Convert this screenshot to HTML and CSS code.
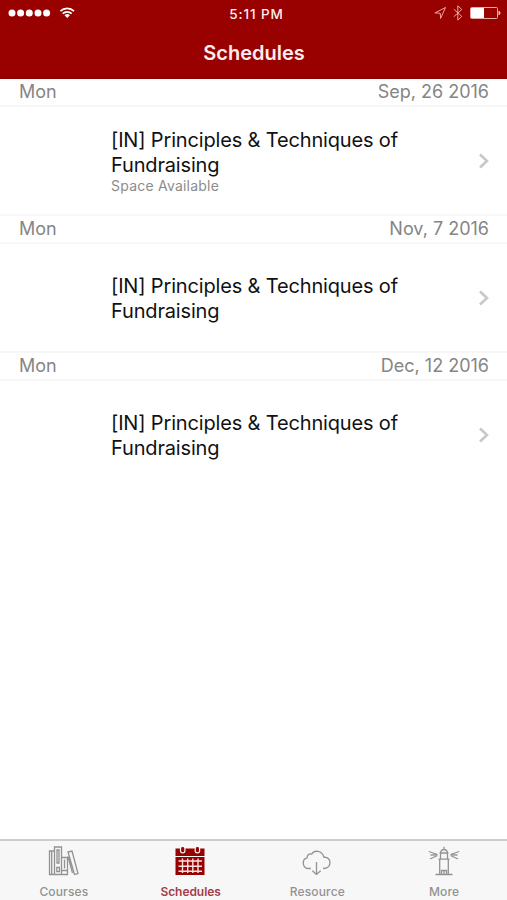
FILE: index.html
```html
<!DOCTYPE html>
<html lang="en">
<head>
<meta charset="utf-8">
<title>Schedules</title>
<link rel="stylesheet" href="styles.css">
</head>
<body>
<div class="app">
  <header class="top">
    <div class="status">
      <svg class="signal" width="80" height="26" viewBox="0 0 80 26">
        <g fill="#fff"><circle cx="12" cy="13" r="3.5"/><circle cx="20.6" cy="13" r="3.5"/><circle cx="29.3" cy="13" r="3.5"/><circle cx="38" cy="13" r="3.5"/><circle cx="46.6" cy="13" r="3.5"/><path d="M67.2 18l-2.7-2.8a3.9 3.9 0 0 1 5.4 0z"/></g>
        <g fill="none" stroke="#fff" stroke-width="1.7"><path d="M60.4 11.2a9.8 9.8 0 0 1 13.6 0M62.7 13.6a6.5 6.5 0 0 1 9 0"/></g>
      </svg>
      <span class="clock">5:11 PM</span>
      <svg class="indicators" width="80" height="26" viewBox="427 0 80 26">
        <g fill="none" stroke="#e9a9a5" stroke-width="1"><path d="M445.5 7.5l-10.6 5.4 5.3.3.4 5.2z"/><path d="M453.8 9.2l8 7.2-4 3.7V5.8l4 3.7-8 7.2"/><rect x="470.5" y="7.5" width="27" height="11" rx="1"/></g>
        <path d="M471 8h13v10h-13z" fill="#fff"/><path d="M498.5 10.8q2 .4 2 2.2t-2 2.2z" fill="#f1c4bf"/>
      </svg>
    </div>
    <h1 class="title">Schedules</h1>
  </header>
  <main class="list">
    <section class="group">
      <div class="day"><span>Mon</span><span>Sep, 26 2016</span></div>
      <div class="course">
        <div class="info"><div class="name">[IN] Principles &amp; Techniques of Fundraising</div><div class="note">Space Available</div></div>
        <svg class="chevron" width="12" height="18" viewBox="0 0 12 18"><path d="M2 2.5l7 6.5-7 6.5"/></svg>
      </div>
    </section>
    <section class="group">
      <div class="day"><span>Mon</span><span>Nov, 7 2016</span></div>
      <div class="course">
        <div class="info"><div class="name">[IN] Principles &amp; Techniques of Fundraising</div></div>
        <svg class="chevron" width="12" height="18" viewBox="0 0 12 18"><path d="M2 2.5l7 6.5-7 6.5"/></svg>
      </div>
    </section>
    <section class="group">
      <div class="day"><span>Mon</span><span>Dec, 12 2016</span></div>
      <div class="course last">
        <div class="info"><div class="name">[IN] Principles &amp; Techniques of Fundraising</div></div>
        <svg class="chevron" width="12" height="18" viewBox="0 0 12 18"><path d="M2 2.5l7 6.5-7 6.5"/></svg>
      </div>
    </section>
  </main>
  <nav class="tabs">
    <div class="tab">
      <svg width="32" height="32" viewBox="0 0 32 32"><g class="line"><path d="M2.5 5h5v23.500h-5zM4.700 5v23.500M7.500 1h7v27.500h-7zM10 4h2v13h-2zM9.800 21.500h2.700v4H9.800zM14.500 11.500h6v17h-6zM17.500 13.500v9M14.500 24.500h6"/><path d="M21 6l4-1 6 22.500-3.500 1zM21 10.500l4.500 16.500"/></g></svg>
      <span>Courses</span>
    </div>
    <div class="tab active">
      <svg width="32" height="32" viewBox="0 0 32 32"><path fill="#990000" d="M1.5 2.500h29V10h-29zM1.5 11h29v18h-29z"/><g fill="#990000" stroke="#f7f7f7" stroke-width="1.200"><path d="M6.500 2.500q0-2 2.200-2t2.200 2V5q0 1.800-2.200 1.800T6.500 5zM21.200 2.500q0-2 2.200-2t2.200 2V5q0 1.800-2.200 1.800T21.200 5z"/></g><path fill="none" stroke="#f7e1e1" stroke-width="1.400" d="M4.500 15H28M4.500 20.200H28M4.500 25.300H28M8.500 12.500V27M13.700 12.500V27M18.800 12.500V27M24 12.500V27"/></svg>
      <span>Schedules</span>
    </div>
    <div class="tab">
      <svg width="32" height="32" viewBox="0 0 32 32"><g class="line"><path d="M9.800 22.500H8a5.500 5.500 0 0 1-2-10.700c.2-3 2.200-4.500 4.800-3.800C13.100 4.100 21 3.800 23 11.300c4-.3 6 2.300 6 5.300 0 3.700-2.600 5.900-7 5.900"/><path d="M15.500 16v12.500M11.300 24.800l4.200 3.700 4.200-3.700"/></g></svg>
      <span>Resource</span>
    </div>
    <div class="tab">
      <svg width="32" height="32" viewBox="0 0 32 32"><g class="line"><path d="M16 .8v2.700M12.500 7q.5-3.500 3.500-3.500T19.500 7M11.500 7h9M12.500 7v6M19.500 7v6M10.500 13.200h11M11.700 13.500v14.700M20.300 13.500v14.700M7.500 28.500h17M13.500 28v-3.500h5V28M16 24.500V28"/><path d="M9.500 8.500L.8 5.500M9.500 8.800L2.500 9M9.500 9.500L2 13M22.500 8.500l8.700-3M22.500 8.800l7 .2M22.500 9.500L30 13"/></g></svg>
      <span>More</span>
    </div>
  </nav>
</div>
</body>
</html>
```
FILE: styles.css
```css
* { box-sizing: border-box; }
body { margin: 0; font-family: Inter, "Liberation Sans", sans-serif; background: #fff; }
svg { display: block; flex: none; }
.app { width: 507px; height: 900px; display: flex; flex-direction: column; overflow: hidden; }
.top { height: 79px; background: #990000; border-bottom: 1px solid #860000; color: #fdeeed; flex: none; }
.status { height: 26px; display: flex; justify-content: space-between; }
.clock { font-size: 13.5px; font-weight: 500; line-height: 28px; letter-spacing: .9px; margin-left: 6px; }
.title { margin: 0; font-size: 20px; font-weight: 600; line-height: 54px; text-align: center; padding-left: 1px; }
.list { flex: 1; }
.group { height: 137px; display: flex; flex-direction: column; }
.day { height: 28px; flex: none; display: flex; justify-content: space-between; padding: 0 18px 0 19px; border-bottom: 2px solid #f7f7f7; font-size: 18px; line-height: 25px; color: #858585; }
.course { flex: 1; display: flex; align-items: center; justify-content: space-between; padding: 0 17px 0 111px; border-bottom: 2px solid #f7f7f7; }
.last { border-color: transparent; }
.info { width: 320px; padding-top: 2px; }
.name { font-size: 20px; line-height: 25px; color: #111; letter-spacing: -.16px; }
.note { font-size: 14px; line-height: 16px; padding-bottom: 2px; color: #8c8c8c; letter-spacing: .22px; }
.chevron { fill: none; stroke: #c7c7cc; stroke-width: 2.6; }
.tabs { height: 61px; flex: none; display: flex; border-top: 2px solid #cdcdcd; background: #f7f7f7; }
.tab { flex: 1; display: flex; flex-direction: column; align-items: center; padding-top: 5px; color: #929292; font-size: 12px; font-weight: 500; line-height: 16px; letter-spacing: .15px; }
.tab span { margin-top: 6px; padding-left: 1px; }
.active { color: #a63a4a; font-weight: 600; letter-spacing: -.05px; }
.line { fill: none; stroke: #929292; stroke-width: 1.3; }
```
